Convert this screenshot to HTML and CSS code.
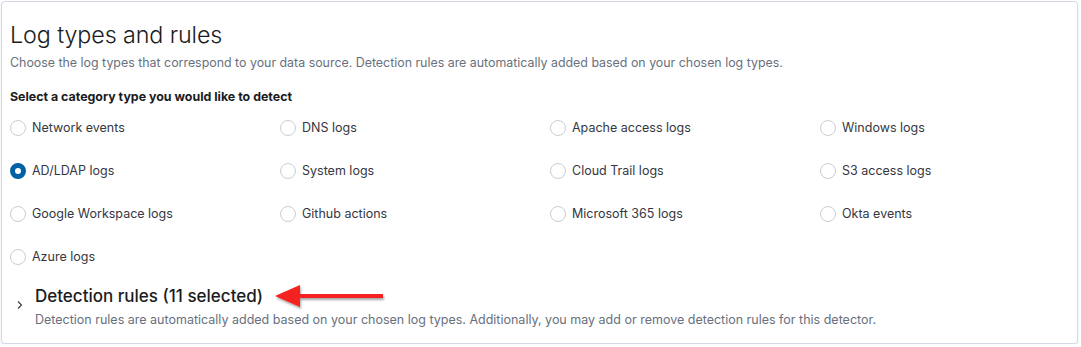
FILE: index.html
```html
<!DOCTYPE html>
<html lang="en">
<head>
  <meta charset="UTF-8">
  <title>Log types and rules</title>
  <link rel="stylesheet" href="styles.css">
</head>
<body>
  <!-- Log types panel -->
  <div class="panel">
    <h1 class="panel-title">Log types and rules</h1>
    <p class="panel-subtitle">Choose the log types that correspond to your data source. Detection rules are automatically added based on your chosen log types.</p>

    <div class="field-label">Select a category type you would like to detect</div>
    <div class="radio-grid">
      <label class="radio"><span class="radio-dot"></span>Network events</label>
      <label class="radio"><span class="radio-dot"></span>DNS logs</label>
      <label class="radio"><span class="radio-dot"></span>Apache access logs</label>
      <label class="radio"><span class="radio-dot"></span>Windows logs</label>
      <label class="radio"><span class="radio-dot checked"></span>AD/LDAP logs</label>
      <label class="radio"><span class="radio-dot"></span>System logs</label>
      <label class="radio"><span class="radio-dot"></span>Cloud Trail logs</label>
      <label class="radio"><span class="radio-dot"></span>S3 access logs</label>
      <label class="radio"><span class="radio-dot"></span>Google Workspace logs</label>
      <label class="radio"><span class="radio-dot"></span>Github actions</label>
      <label class="radio"><span class="radio-dot"></span>Microsoft 365 logs</label>
      <label class="radio"><span class="radio-dot"></span>Okta events</label>
      <label class="radio"><span class="radio-dot"></span>Azure logs</label>
    </div>

    <!-- Detection rules accordion -->
    <div class="accordion">
      <svg class="chevron" width="16" height="16" viewBox="0 0 16 16">
        <path d="M6 4.5 L9.5 8 L6 11.5" fill="none" stroke="#343741" stroke-width="1.1"/>
      </svg>
      <div class="accordion-body">
        <div class="accordion-title">
          Detection rules (11 selected)
          <svg class="callout-arrow" width="120" height="30" viewBox="0 0 120 30">
            <defs>
              <filter id="sh" x="-10%" y="-30%" width="130%" height="170%">
                <feDropShadow dx="1" dy="2" stdDeviation="1.2" flood-color="#000" flood-opacity="0.35"/>
              </filter>
            </defs>
            <g filter="url(#sh)">
              <rect x="24" y="11" width="86" height="4" fill="#f52121"/>
              <polygon points="2,13 27,2 27,24" fill="#f52121"/>
            </g>
          </svg>
        </div>
        <p class="accordion-desc">Detection rules are automatically added based on your chosen log types. Additionally, you may add or remove detection rules for this detector.</p>
      </div>
    </div>
  </div>
</body>
</html>
```

FILE: styles.css
```css
/* ====== RESET ====== */
* {
  margin: 0;
  padding: 0;
  box-sizing: border-box;
}

body {
  font-family: Inter, "Noto Sans", sans-serif;
  background: #fff;
  color: #343741;
  padding: 1px 3px 0 1px;
}

/* ====== PANEL ====== */
.panel {
  border: 1px solid #d3dae6;
  border-radius: 4px;
  box-shadow: 0 1px 2px rgba(152, 162, 179, 0.3);
  background: #fff;
  padding: 16px 8px 13px 8px;
  height: 343px;
}

.panel-title {
  font-size: 23.3px;
  font-weight: 300;
  line-height: 34px;
  color: #1a1c21;
  letter-spacing: -0.1px;
}
.panel-subtitle {
  font-size: 12.4px;
  line-height: 18px;
  color: #69707d;
  margin-top: 2px;
}

.field-label {
  font-size: 12.4px;
  font-weight: 700;
  color: #1a1c21;
  line-height: 16px;
  margin-top: 17px;
}

/* ====== RADIO GRID ====== */
.radio-grid {
  display: grid;
  grid-template-columns: repeat(4, 270px);
  grid-auto-rows: 43px;
  margin-top: 14px;
}
.radio {
  display: flex;
  align-items: flex-start;
  gap: 6px;
  font-size: 12.5px;
  line-height: 18px;
  color: #343741;
}
.radio-dot {
  width: 16px;
  height: 16px;
  border-radius: 50%;
  border: 1px solid #c9cdd4;
  background: #fff;
  margin-top: 1px;
  flex-shrink: 0;
}
.radio-dot.checked {
  border: 5px solid #0061a6;
  background: #fff;
}

/* ====== ACCORDION ====== */
.accordion {
  display: flex;
  gap: 7px;
  margin-top: -7px;
}
.chevron {
  margin-top: 13px;
  margin-left: 2px;
  flex-shrink: 0;
}
.accordion-title {
  position: relative;
  font-size: 17px;
  font-weight: 500;
  line-height: 24px;
  color: #1a1c21;
}
.callout-arrow {
  position: absolute;
  left: 238px;
  top: -1px;
}
.accordion-desc {
  font-size: 12.5px;
  line-height: 18px;
  color: #69707d;
  margin-top: 3px;
}
```
